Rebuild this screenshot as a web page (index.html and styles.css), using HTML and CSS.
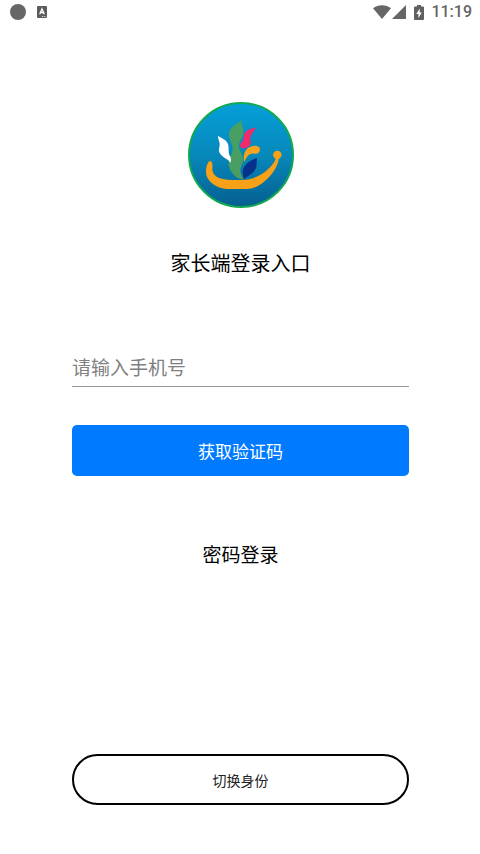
FILE: index.html
```html
<!DOCTYPE html>
<html lang="zh-CN">
<head>
  <meta charset="utf-8">
  <meta name="viewport" content="width=device-width, initial-scale=1">
  <title>家长端登录入口</title>
  <link rel="stylesheet" href="styles.css">
</head>
<body>
  <header class="status">
    <div class="status-group notices">
      <svg width="16" height="16" viewBox="0 0 16 16" aria-hidden="true"><circle cx="8" cy="8" r="8" fill="#666"/></svg>
      <svg width="10" height="12" viewBox="0 0 10 12" aria-hidden="true">
        <rect width="10" height="12" rx="1" fill="#5c5c5c"/>
        <path d="M2.7 8.2 5 2.8 7.3 8.2M3.500 6.500h3" fill="none" stroke="#fff" stroke-width="1.3"/>
        <path d="M5 10.500h1.200M7.200 10.500h1.200" stroke="#ddd" stroke-width="1"/>
      </svg>
    </div>
    <div class="status-group">
      <svg width="18" height="14" viewBox="0 0 18 14" aria-hidden="true"><path d="M0 3.200C5-.9 13-.9 18 3.200L9 14z" fill="#666"/></svg>
      <svg class="signal" width="14" height="14" viewBox="0 0 14 14" aria-hidden="true"><path d="M14 0v14H0z" fill="#666"/></svg>
      <svg class="battery" width="10" height="15" viewBox="0 0 10 15" aria-hidden="true">
        <path d="M3 0h4v1.500h2q1 0 1 1V14q0 1-1 1H1q-1 0-1-1V2.500q0-1 1-1h2z" fill="#606060"/>
        <path d="M5.700 3.500 2.300 9h2.200v4L7.800 7.500H5.700z" fill="#fff"/>
      </svg>
      <time class="clock">11:19</time>
    </div>
  </header>
  <main class="login">
    <svg class="logo" viewBox="12 12 318 318" role="img" aria-label="标志">
      <defs>
        <linearGradient id="sea" x1="0" y1="0" x2="0" y2="1">
          <stop offset="0" stop-color="#05a0da"/>
          <stop offset=".5" stop-color="#0788ba"/>
          <stop offset="1" stop-color="#055f90"/>
        </linearGradient>
      </defs>
      <circle cx="171" cy="171" r="156" fill="url(#sea)" stroke="#10a951" stroke-width="6"/>
      <g transform="translate(48 42)">
        <path d="M124 24C115 36 91 43 87 62C84 78 96 90 98 107C99 125 86 138 86 155C87 174 98 186 112 198L132 204C126 192 118 181 122 168C125 157 131 150 130 140C128 125 115 113 116 100C118 87 129 76 130 60C131 47 124 38 124 24z" fill="#499f61"/>
        <path d="M54 71C64 79 79 82 84 96C88 110 83 122 91 134C94 141 93 148 91 152C82 139 64 136 58 121C54 110 62 102 58 90C56 83 54 78 54 71z" fill="#fff"/>
        <path d="M167 48C152 48 136 55 132 68C129 78 132 84 125 90C118 97 118 106 127 109C138 110 149 105 152 94C153 85 148 79 154 69C157 62 163 57 167 48z" fill="#ef2b6b"/>
        <path d="M133 151C129 134 132 119 143 109C154 100 171 98 178 106C184 116 175 128 163 125C147 122 140 134 133 151z" fill="#f9a21b"/>
        <path d="M171 138C154 143 134 155 129 173C126 184 131 192 131 202C146 190 163 183 169 165C171 156 169 148 171 138z" fill="#07328c"/>
        <path d="M28 147C36 145 39 158 37 167C36 181 43 192 57 198C77 205 103 204 125 204C158 204 187 189 207 169C218 157 224 149 227 140C216 135 216 118 231 116C246 116 248 132 240 138L236 142C233 165 215 190 197 205C179 222 163 230 139 231H80C53 229 29 215 20 192C15 176 19 157 28 147z" fill="#f6a117"/>
      </g>
    </svg>
    <h1 class="title">家长端登录入口</h1>
    <form class="form">
      <input class="phone" type="tel" placeholder="请输入手机号" aria-label="请输入手机号">
      <button class="submit" type="button">获取验证码</button>
    </form>
    <a class="password-link" href="#password">密码登录</a>
    <button class="switch" type="button">切换身份</button>
  </main>
</body>
</html>
```
FILE: styles.css
```css
* {
  box-sizing: border-box;
}

body {
  display: flex;
  flex-direction: column;
  min-height: 100vh;
  margin: 0;
  background: #fff;
  color: #000;
  font-family: "Noto Sans CJK SC", sans-serif;
}

svg {
  display: block;
}

.status {
  display: flex;
  align-items: center;
  justify-content: space-between;
  height: 24px;
  padding: 0 8px 0 10px;
}

.status-group {
  display: flex;
  align-items: center;
}

.notices {
  gap: 11px;
}

.signal {
  margin-left: 1px;
}

.battery {
  margin: 0 7px 0 8px;
}

.clock {
  color: #666;
  font: 500 16px/24px Roboto, sans-serif;
}

.login {
  display: flex;
  flex: 1;
  flex-direction: column;
  align-items: center;
  padding: 78px 71px 49px 72px;
}

.logo {
  width: 106px;
  height: 106px;
}

.title {
  margin: 40px 0 0;
  font-size: 20px;
  font-weight: 400;
  line-height: 30px;
}

.form {
  display: flex;
  flex-direction: column;
  gap: 38px;
  width: 100%;
  margin-top: 69px;
}

.phone {
  width: 100%;
  height: 40px;
  padding: 0;
  border: 0;
  border-bottom: 1px solid #999;
  border-radius: 0;
  background: none;
  color: #000;
  font: 19px/28px "Noto Sans CJK SC", sans-serif;
}

.phone::placeholder {
  color: #808080;
  opacity: 1;
}

.submit,
.switch {
  width: 100%;
  height: 51px;
  padding: 0;
  font-family: inherit;
}

.submit {
  border: 0;
  border-radius: 5px;
  background: #007aff;
  color: #fff;
  font-size: 17px;
}

.password-link {
  margin-top: 64px;
  color: #000;
  font-size: 19px;
  line-height: 28px;
  text-decoration: none;
}

.switch {
  margin-top: auto;
  border: 2px solid #000;
  border-radius: 26px;
  background: #fff;
  color: #222;
  font-size: 14px;
}
```
